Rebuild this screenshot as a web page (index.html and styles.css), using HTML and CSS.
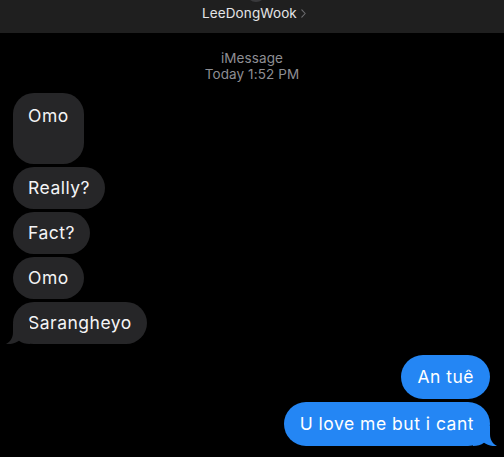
FILE: index.html
```html
<!DOCTYPE html>
<html>
<head>
<meta charset="utf-8">
<link rel="stylesheet" href="styles.css">
</head>
<body>
<div class="screen">
  <header class="header">
    <div class="avatar"></div>
    <div class="contact">
      <span class="name">LeeDongWook</span>
      <svg class="chev" width="5" height="9" viewBox="0 0 5 9"><path d="M0.8 0.8 L4.2 4.5 L0.8 8.2" fill="none" stroke="#6d6d70" stroke-width="1.1" stroke-linecap="round" stroke-linejoin="round"/></svg>
    </div>
  </header>
  <div class="meta">
    <div>iMessage</div>
    <div>Today 1:52 PM</div>
  </div>
  <div class="thread">
    <div class="group recv">
      <div class="bubble tall">Omo</div>
      <div class="bubble">Really?</div>
      <div class="bubble">Fact?</div>
      <div class="bubble">Omo</div>
      <div class="bubble last">Sarangheyo<svg class="tail" width="24" height="20" viewBox="0 0 24 20"><path d="M7 0 L7 8 C7 14 4.5 17.5 0 20 C5 20.6 10 19 13 16.8 C16 19 19.5 20 24 20 L24 0 Z"/></svg></div>
    </div>
    <div class="group sent">
      <div class="bubble">An tuê</div>
      <div class="bubble last">U love me but i cant<svg class="tail" width="24" height="20" viewBox="0 0 24 20"><path d="M7 0 L7 8 C7 14 4.5 17.5 0 20 C5 20.6 10 19 13 16.8 C16 19 19.5 20 24 20 L24 0 Z"/></svg></div>
    </div>
  </div>
</div>
</body>
</html>
```
FILE: styles.css
```css
* { box-sizing: border-box; }
html, body {
  margin: 0;
  padding: 0;
  background: #000;
}
.screen {
  width: 504px;
  height: 457px;
  overflow: hidden;
  background: #000;
  font-family: Inter, "Noto Sans", sans-serif;
  display: flex;
  flex-direction: column;
}
.header {
  height: 33px;
  background: #1f1f1f;
  display: flex;
  flex-direction: column;
  align-items: center;
  overflow: hidden;
  flex-shrink: 0;
}
.avatar {
  width: 20px;
  height: 20px;
  border-radius: 50%;
  background: #3a3a3c;
  margin-top: -18px;
  margin-left: 8px;
}
.contact {
  display: flex;
  align-items: center;
  gap: 4px;
  margin-top: 3px;
  margin-left: 4px;
}
.name {
  color: #e4e4e6;
  font-size: 13.5px;
  line-height: 16px;
  letter-spacing: 0.1px;
}
.chev { display: block; margin-top: 1px; }
.meta {
  margin-top: 17px;
  text-align: center;
  color: #8e8e93;
  font-size: 13.5px;
  line-height: 16px;
  letter-spacing: 0.1px;
}
.thread {
  margin-top: 11px;
  display: flex;
  flex-direction: column;
  gap: 11px;
}
.group {
  display: flex;
  flex-direction: column;
  gap: 3px;
}
.recv { align-items: flex-start; padding-left: 13px; }
.sent { align-items: flex-end; padding-right: 14px; gap: 3px; }
.bubble {
  position: relative;
  font-size: 17.5px;
  line-height: 22px;
  padding: 10px 15px;
  border-radius: 21px;
  color: #f4f4f6;
  letter-spacing: 0.5px;
}
.recv .bubble { background: #262628; }
.sent .bubble {
  background: #2486f4;
  color: #fff;
  padding: 11px 16px 11px;
  border-radius: 22px;
}
.bubble.tall { height: 71px; padding-top: 12px; }
.tail {
  position: absolute;
  bottom: 0;
  display: block;
}
.recv .tail { left: -7px; fill: #262628; }
.sent .tail { right: -7px; fill: #2486f4; transform: scaleX(-1); }
```
